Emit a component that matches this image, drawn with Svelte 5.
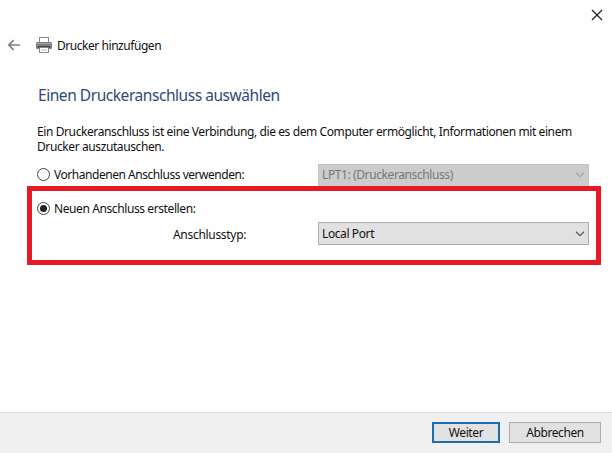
<script lang="ts">
	const existingPorts = ['LPT1: (Druckeranschluss)'];
	const portTypes = ['Local Port'];

	let mode: 'existing' | 'new' = $state('new');
</script>

{#snippet radio(value: 'existing' | 'new', label: string)}
	<button class="radio {value}" role="radio" aria-checked={mode === value} onclick={() => (mode = value)}>
		<span class="dot" class:checked={mode === value}></span>
		<span>{label}</span>
	</button>
{/snippet}

{#snippet combo(text: string, disabled: boolean)}
	<div class="combo" class:disabled>
		<span>{text}</span>
		<svg width="10" height="6" viewBox="0 0 10 6" aria-hidden="true">
			<path d="M1 0.8 L5 4.6 L9 0.8" fill="none" stroke="currentColor" stroke-width="1.2" />
		</svg>
	</div>
{/snippet}

<div class="wizard">
	<header class="titlebar">
		<button class="close" aria-label="Schließen">
			<svg width="12" height="12" viewBox="0 0 12 12">
				<path d="M1 1 L11 11 M11 1 L1 11" stroke="#222" stroke-width="1.3" />
			</svg>
		</button>
	</header>

	<div class="nav">
		<svg class="back" width="14" height="12" viewBox="0 0 14 12">
			<path d="M13 6 H2 M6.6 1.2 L1.8 6 L6.6 10.8" fill="none" stroke="#808080" stroke-width="1.7" />
		</svg>
		<svg class="printer" width="16" height="16" viewBox="0 0 16 16">
			<rect x="3.5" y="0.5" width="9" height="6" fill="#fff" stroke="#888" />
			<rect x="0" y="5" width="16" height="7" rx="1" fill="#808080" />
			<path d="M1 6.5 H15" stroke="#a5a5a5" />
			<rect x="2" y="9" width="12" height="2" fill="#454545" />
			<rect x="3.5" y="10.5" width="9" height="5" fill="#fff" stroke="#888" />
			<path d="M5 13 H11" stroke="#bbb" />
		</svg>
		<span class="nav-title">Drucker hinzufügen</span>
	</div>

	<main>
		<h1>Einen Druckeranschluss auswählen</h1>
		<p class="intro">
			Ein Druckeranschluss ist eine Verbindung, die es dem Computer ermöglicht, Informationen mit einem
			Drucker auszutauschen.
		</p>

		<div class="options" role="radiogroup">
			<div class="row">
				{@render radio('existing', 'Vorhandenen Anschluss verwenden:')}
				{@render combo(existingPorts[0], mode !== 'existing')}
			</div>
			<div class="row new-port">
				{@render radio('new', 'Neuen Anschluss erstellen:')}
			</div>
			<div class="row port-type">
				<span class="type-label">Anschlusstyp:</span>
				{@render combo(portTypes[0], mode !== 'new')}
			</div>
			<div class="highlight" aria-hidden="true"></div>
		</div>
	</main>

	<footer>
		<button class="btn primary">Weiter</button>
		<button class="btn">Abbrechen</button>
	</footer>
</div>

<style>
	:global(body) {
		margin: 0;
		background: #fefefe;
	}

	.wizard {
		width: 612px;
		height: 453px;
		display: flex;
		flex-direction: column;
		overflow: hidden;
		box-sizing: border-box;
		background: #fefefe;
		color: #111;
		font-family: 'Noto Sans', 'Open Sans', sans-serif;
		font-size: 12px;
		letter-spacing: -0.4px;
		line-height: 16px;
	}

	button {
		font: inherit;
		letter-spacing: inherit;
		color: inherit;
		padding: 0;
		border: 0;
		background: none;
		white-space: nowrap;
	}

	/* Title bar */
	.titlebar {
		display: flex;
		justify-content: flex-end;
		height: 30px;
		padding-right: 9px;
	}
	.close {
		display: flex;
		align-items: center;
		height: 30px;
	}

	.nav {
		display: flex;
		align-items: center;
		height: 30px;
		padding-left: 7px;
		white-space: nowrap;
	}
	.printer {
		margin: 0 5px 0 15px;
	}
	.nav-title {
		padding-top: 2px;
		letter-spacing: -0.45px;
	}

	/* Content */
	main {
		flex: 1;
		padding-left: 37px;
	}
	h1 {
		margin: 23px 0 0 1px;
		height: 24px;
		color: #2f4a73;
		font-size: 15.5px;
		font-weight: 400;
		letter-spacing: -0.45px;
		line-height: 25px;
		white-space: nowrap;
	}
	.intro {
		width: 560px;
		margin: 17px 0 0;
		line-height: 15px;
	}

	.options {
		position: relative;
		margin-top: 9px;
	}
	.row {
		display: flex;
		align-items: center;
		justify-content: space-between;
		height: 24px;
		padding-right: 23px;
	}
	.new-port {
		margin-top: 10px;
	}
	.port-type {
		margin-top: 1px;
		padding-left: 136px;
	}
	.type-label {
		padding-top: 1px;
		letter-spacing: -0.3px;
	}

	.radio {
		display: flex;
		align-items: center;
		gap: 4px;
	}
	.radio.existing {
		letter-spacing: -0.46px;
	}
	.dot {
		display: flex;
		align-items: center;
		justify-content: center;
		width: 13px;
		height: 13px;
		margin-bottom: 1px;
		box-sizing: border-box;
		border: 1px solid #444;
		border-radius: 50%;
		background: #fff;
	}
	.dot.checked::after {
		content: '';
		width: 7px;
		height: 7px;
		border-radius: 50%;
		background: #222;
	}

	.combo {
		display: flex;
		align-items: center;
		justify-content: space-between;
		width: 271px;
		height: 23px;
		box-sizing: border-box;
		padding: 0 3px;
		border: 1px solid #adadad;
		background: #e1e1e1;
		white-space: nowrap;
	}
	.combo svg {
		color: #555;
	}
	.combo.disabled {
		border-color: #c3c3c3;
		background: #cccccc;
		color: #777;
	}
	.combo.disabled svg {
		color: #a5a5a5;
	}
	.port-type .combo {
		margin-bottom: 1px;
	}

	.highlight {
		position: absolute;
		top: 23px;
		left: -10px;
		width: 574px;
		height: 79px;
		box-sizing: border-box;
		border: 5px solid #e41b23;
		pointer-events: none;
	}

	/* Footer */
	footer {
		display: flex;
		justify-content: flex-end;
		gap: 9px;
		height: 41px;
		box-sizing: border-box;
		padding: 9px 11px 0 0;
		border-top: 1px solid #dfdfdf;
		background: #f0f0f0;
	}
	.btn {
		width: 92px;
		height: 21px;
		box-sizing: border-box;
		border: 1px solid #adadad;
		background: #e1e1e1;
		line-height: 19px;
	}
	.btn.primary {
		width: 68px;
		border: 2px solid #1b6fb0;
		line-height: 17px;
	}
</style>
